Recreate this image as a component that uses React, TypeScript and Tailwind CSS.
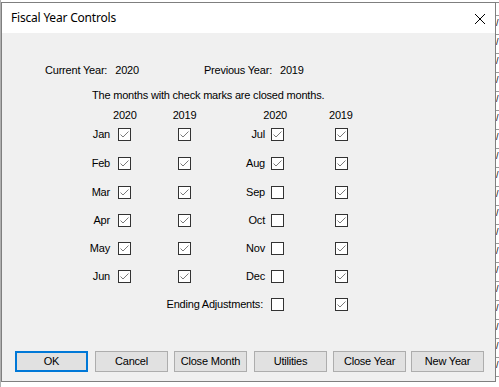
import React from "react";

const FONT = { fontFamily: '"Liberation Sans", Arial, sans-serif' };

function Check({ checked }: { checked: boolean }) {
  return (
    <div className="w-[13px] h-[13px] shrink-0 border border-[#333333] bg-white flex items-center justify-center">
      {checked && (
        <svg width="11" height="11" viewBox="0 0 11 11">
          <polyline points="1.5,5.5 4,8 9.5,2.5" fill="none" stroke="#7a7a7a" strokeWidth="1" />
        </svg>
      )}
    </div>
  );
}

function MonthRow({
  l,
  a,
  b,
  r,
  c,
  d,
  mt,
}: {
  l: string;
  a: boolean;
  b: boolean;
  r: string;
  c: boolean;
  d: boolean;
  mt: string;
}) {
  return (
    <div className={`flex items-center h-[13px] ${mt}`}>
      <div className="w-[108px] text-right leading-[13px]">{l}</div>
      <div className="w-[8px]" />
      <Check checked={a} />
      <div className="w-[47px]" />
      <Check checked={b} />
      <div className="w-[74px] text-right leading-[13px]">{r}</div>
      <div className="w-[6px]" />
      <Check checked={c} />
      <div className="w-[51px]" />
      <Check checked={d} />
    </div>
  );
}

function Btn({ label, cls, primary }: { label: string; cls: string; primary?: boolean }) {
  return (
    <div
      className={`w-[73px] h-[21px] flex items-center justify-center bg-[#e1e1e1] text-black ${
        primary ? "border-2 border-[#0078d7]" : "border border-[#adadad]"
      } ${cls}`}
    >
      {label}
    </div>
  );
}

export default function App() {
  const gridLines = [15, 34, 53, 72, 91, 110, 129, 148, 167, 186, 205, 224, 243, 262, 281, 300, 319, 338, 357, 376];
  const slashLines = gridLines.filter((y) => y < 360);
  return (
    <div className="relative w-[499px] h-[387px] bg-white overflow-hidden" style={FONT}>
      {/* background sheet */}
      <div className="absolute left-0 top-[2px] w-[499px] h-px bg-[#8a8a8a]" />
      <div className="absolute left-0 top-0 w-px h-[387px] bg-[#b0b0b0]" />
      {gridLines.map((y) => (
        <div key={y} className="absolute left-[496px] w-[3px] h-px bg-[#9a9a9a]" style={{ top: y }} />
      ))}
      {slashLines.map((y) => (
        <div
          key={"s" + y}
          className="absolute left-[496px] text-[9px] leading-[9px] text-black"
          style={{ top: y + 4 }}
        >
          /
        </div>
      ))}

      {/* dialog */}
      <div className="absolute left-[1px] top-[2px] w-[495px] h-[380px] border border-[#7f7f7f] flex flex-col">
        <div
          className="h-[30px] bg-white flex items-center justify-between pl-[9px] pr-[8px] text-[12px] text-black"
          style={{ fontFamily: '"Noto Sans", "Open Sans", sans-serif' }}
        >
          <span className="tracking-[-0.2px]">Fiscal Year Controls</span>
          <svg width="12" height="12" viewBox="0 0 12 12" className="mr-[1px] mt-[1px]">
            <path d="M1 1 L11 11 M11 1 L1 11" stroke="#000" strokeWidth="1" />
          </svg>
        </div>
        <div className="flex-1 bg-[#f0f0f0] text-[11px] tracking-[-0.2px] text-black flex flex-col">
          <div className="flex h-[13px] leading-[13px] mt-[31px]">
            <span className="ml-[43px]">Current Year:</span>
            <span className="ml-[8px]">2020</span>
            <span className="ml-[65px]">Previous Year:</span>
            <span className="ml-[8px]">2019</span>
          </div>
          <div className="h-[13px] leading-[13px] mt-[12px] pl-[90px]">
            The months with check marks are closed months.
          </div>
          <div className="flex h-[13px] leading-[13px] mt-[7px]">
            <span className="ml-[111px]">2020</span>
            <span className="ml-[36px]">2019</span>
            <span className="ml-[67px]">2020</span>
            <span className="ml-[42px]">2019</span>
          </div>
          <MonthRow l="Jan" a b r="Jul" c d mt="mt-[6px]" />
          <MonthRow l="Feb" a b r="Aug" c d mt="mt-[16px]" />
          <MonthRow l="Mar" a b r="Sep" c={false} d mt="mt-[16px]" />
          <MonthRow l="Apr" a b r="Oct" c={false} d mt="mt-[15px]" />
          <MonthRow l="May" a b r="Nov" c={false} d mt="mt-[15px]" />
          <MonthRow l="Jun" a b r="Dec" c={false} d mt="mt-[15px]" />
          <div className="flex items-center h-[13px] mt-[15px]">
            <div className="w-[261px] text-right leading-[13px]">Ending Adjustments:</div>
            <div className="w-[8px]" />
            <Check checked={false} />
            <div className="w-[51px]" />
            <Check checked />
          </div>
          <div className="flex mt-[40px]">
            <Btn label="OK" primary cls="ml-[13px]" />
            <Btn label="Cancel" cls="ml-[7px]" />
            <Btn label="Close Month" cls="ml-[6px]" />
            <Btn label="Utilities" cls="ml-[7px]" />
            <Btn label="Close Year" cls="ml-[6px]" />
            <Btn label="New Year" cls="ml-[5px]" />
          </div>
        </div>
      </div>
    </div>
  );
}
